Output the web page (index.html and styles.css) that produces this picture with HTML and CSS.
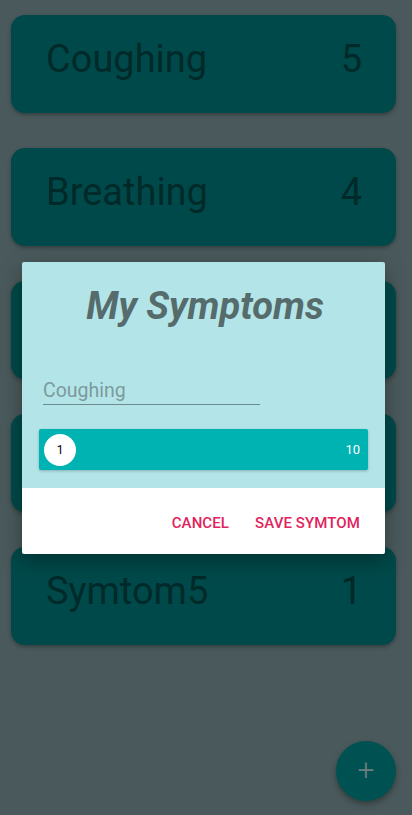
FILE: index.html
```html
<!DOCTYPE html>
<html>
<head>
<meta charset="utf-8">
<link rel="stylesheet" href="styles.css">
</head>
<body>
<main class="list">
  <div class="card"><span class="name">Coughing</span><span class="val">5</span></div>
  <div class="card"><span class="name">Breathing</span><span class="val">4</span></div>
  <div class="card"><span class="name">Symtom3</span><span class="val">3</span></div>
  <div class="card"><span class="name">Symtom4</span><span class="val">2</span></div>
  <div class="card"><span class="name">Symtom5</span><span class="val">1</span></div>
</main>
<button class="fab"><span class="plus">+</span></button>
<div class="overlay"></div>
<div class="dialog">
  <div class="dialog-body">
    <h1 class="title">My Symptoms</h1>
    <div class="field">Coughing</div>
    <div class="slider">
      <span class="thumb">1</span>
      <span class="max">10</span>
    </div>
  </div>
  <div class="dialog-actions">
    <span class="btn">CANCEL</span>
    <span class="btn">SAVE SYMTOM</span>
  </div>
</div>
</body>
</html>
```
FILE: styles.css
```css
* { box-sizing: border-box; }
html, body { margin: 0; padding: 0; }
body {
  width: 412px;
  height: 815px;
  overflow: hidden;
  background: #94b4b8;
  font-family: Roboto, "Noto Sans", sans-serif;
  position: relative;
}
.list {
  display: flex;
  flex-direction: column;
  gap: 35px;
  padding: 15px 16px 0 11px;
}
.card {
  height: 98px;
  border-radius: 14px;
  background: #009294;
  display: flex;
  justify-content: space-between;
  align-items: flex-start;
  padding: 18px 34px 0 35px;
  color: #005252;
  font-size: 38px;
  line-height: 52px;
  box-shadow: 0 2px 4px rgba(0,0,0,0.3);
}
.fab {
  position: absolute;
  left: 336px;
  top: 741px;
  width: 60px;
  height: 60px;
  border-radius: 50%;
  border: none;
  background: #00a2a2;
  box-shadow: 0 3px 6px rgba(0,0,0,0.35);
  display: flex;
  align-items: center;
  justify-content: center;
  padding: 0;
}
.plus {
  color: #d4fcfc;
  font-family: Roboto, sans-serif;
  font-size: 30px;
  font-weight: 300;
  line-height: 30px;
  margin-top: -2px;
}
.overlay {
  position: absolute;
  inset: 0;
  background: rgba(0, 0, 0, 0.5);
}
.dialog {
  position: absolute;
  left: 22px;
  top: 262px;
  width: 363px;
  border-radius: 2px;
  overflow: hidden;
  box-shadow: 0 6px 20px rgba(0,0,0,0.35);
}
.dialog-body {
  background: #b3e5e8;
  height: 226px;
  padding: 20px 17px 0 17px;
  display: flex;
  flex-direction: column;
}
.title {
  margin: 0;
  text-align: center;
  font-size: 38px;
  font-weight: 700;
  font-style: italic;
  color: #566b6c;
  line-height: 48px;
  padding-left: 3px;
}
.field {
  margin: 49px 0 0 4px;
  width: 217px;
  font-size: 19.5px;
  line-height: 23px;
  color: #7c9a9c;
  padding-bottom: 2px;
  border-bottom: 1px solid #6f8b8d;
}
.slider {
  margin-top: 24px;
  height: 41px;
  background: #00b3b3;
  border-radius: 2px;
  box-shadow: 0 1px 3px rgba(0,0,0,0.25);
  display: flex;
  align-items: center;
  justify-content: space-between;
  padding: 0 8px 0 5px;
}
.thumb {
  width: 32px;
  height: 32px;
  border-radius: 50%;
  background: #fff;
  color: #000;
  font-size: 12px;
  display: flex;
  align-items: center;
  justify-content: center;
}
.max {
  color: #fff;
  font-size: 13px;
}
.dialog-actions {
  background: #fff;
  height: 66px;
  display: flex;
  justify-content: flex-end;
  align-items: center;
  gap: 26px;
  padding: 4px 25px 0 0;
}
.btn {
  color: #e0245e;
  font-size: 15px;
  font-weight: 500;
  letter-spacing: 0.1px;
}
```
